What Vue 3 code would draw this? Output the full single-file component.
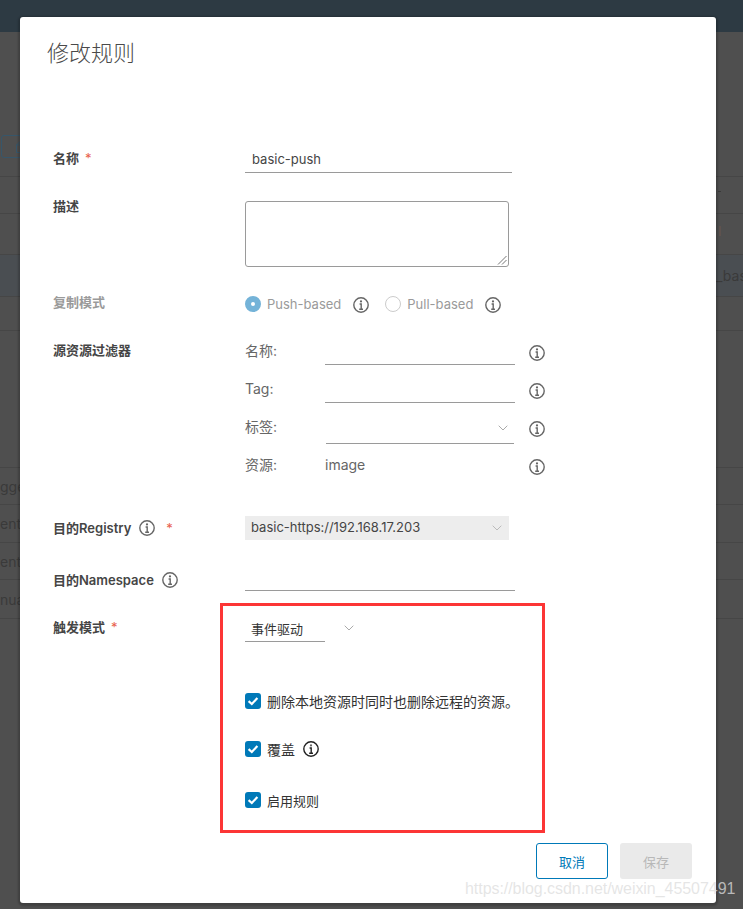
<script setup>
const infoPath = 'M6.6 7H8.2V12M6.2 12.2H10'
const rowHeights = [37, 41, 42, 34, 137, 37, 38, 37, 39, 35]
const leftText = ['', '', '', '', '', 'gge', 'ent_', 'ent_', 'nua', '']
const rightText = ['', '', '_base', '', '', '', '', '', '', '']
const leftRows = rowHeights.map((h, i) => ({ h, text: leftText[i], on: i === 2 }))
const rightRows = rowHeights.map((h, i) => ({ h, text: rightText[i], on: i === 2, bar: i === 1, tick: i === 0 }))
const filters = [
  { label: '名称:', line: true },
  { label: 'Tag:', line: true },
  { label: '标签:', line: true, select: true },
  { label: '资源:', value: 'image' }
]
const checks = [
  { text: '删除本地资源时同时也删除远程的资源。', cls: 'c1' },
  { text: '覆盖', info: true, cls: 'c2' },
  { text: '启用规则', cls: 'c3' }
]
</script>

<template>
  <div class="page">
    <header class="topbar"></header>
    <div class="backdrop">
      <div class="side left">
        <div class="tool">
          <svg class="toolicon" width="8" height="14" viewBox="0 0 8 14"><path d="M.5 12.5V5L4 1.5h4M.5 5H8M.5 12.5H8"/></svg>
        </div>
        <div v-for="(r, i) in leftRows" :key="i" class="row" :class="{ on: r.on }" :style="{ height: r.h + 'px' }">{{ r.text }}</div>
      </div>
      <div class="side right">
        <div v-for="(r, i) in rightRows" :key="i" class="row" :class="{ on: r.on }" :style="{ height: r.h + 'px' }">
          <span v-if="r.bar" class="bar"></span>
          <span v-if="r.tick" class="tick"></span>
          {{ r.text }}
        </div>
      </div>
    </div>

    <section class="modal">
      <h3 class="title">修改规则</h3>
      <form class="form" @submit.prevent>
        <div class="f f-name">
          <label class="lab">名称<i class="req">*</i></label>
          <div class="inp">basic-push</div>
        </div>
        <div class="f f-desc">
          <label class="lab">描述</label>
          <div class="area">
            <svg class="grip" width="10" height="10" viewBox="0 0 10 10"><path d="M1 9.5 9.5 1M5 9.5 9.5 5" stroke="#777" fill="none"/></svg>
          </div>
        </div>
        <div class="f f-mode">
          <label class="lab dim">复制模式</label>
          <div class="radios">
            <span class="radio on"></span><span class="rtext">Push-based</span>
            <svg class="info rinfo" viewBox="0 0 16 16"><circle cx="8" cy="8" r="7.2"/><circle class="dot" cx="8" cy="4.4" r="1.1"/><path :d="infoPath"/></svg>
            <span class="radio pull"></span><span class="rtext">Pull-based</span>
            <svg class="info rinfo" viewBox="0 0 16 16"><circle cx="8" cy="8" r="7.2"/><circle class="dot" cx="8" cy="4.4" r="1.1"/><path :d="infoPath"/></svg>
          </div>
        </div>
        <div class="f f-filter">
          <label class="lab">源资源过滤器</label>
          <div class="filters">
            <div v-for="x in filters" :key="x.label" class="frow">
              <span class="flabel">{{ x.label }}</span>
              <div v-if="x.line" class="fline" :class="{ sel: x.select }">
                <svg v-if="x.select" class="chev" viewBox="0 0 10 6"><path d="M.7.7 5 5l4.3-4.3"/></svg>
              </div>
              <div v-else class="fvalue">{{ x.value }}</div>
              <svg class="info finfo" viewBox="0 0 16 16"><circle cx="8" cy="8" r="7.2"/><circle class="dot" cx="8" cy="4.4" r="1.1"/><path :d="infoPath"/></svg>
            </div>
          </div>
        </div>
        <div class="f f-reg">
          <label class="lab">目的Registry
            <svg class="info linfo" viewBox="0 0 16 16"><circle cx="8" cy="8" r="7.2"/><circle class="dot" cx="8" cy="4.4" r="1.1"/><path :d="infoPath"/></svg>
            <i class="req rr">*</i>
          </label>
          <div class="regsel">basic-https://192.168.17.203
            <svg class="chev" viewBox="0 0 10 6"><path d="M.7.7 5 5l4.3-4.3"/></svg>
          </div>
        </div>
        <div class="f f-ns">
          <label class="lab">目的Namespace
            <svg class="info linfo" viewBox="0 0 16 16"><circle cx="8" cy="8" r="7.2"/><circle class="dot" cx="8" cy="4.4" r="1.1"/><path :d="infoPath"/></svg>
          </label>
          <div class="nsline"></div>
        </div>
        <div class="f f-trigger">
          <label class="lab">触发模式<i class="req">*</i></label>
          <div class="trigger">
            <div class="trigsel"><span class="triginner">事件驱动</span>
              <svg class="chev" viewBox="0 0 10 6"><path d="M.7.7 5 5l4.3-4.3"/></svg>
            </div>
            <div v-for="c in checks" :key="c.text" class="check" :class="c.cls">
              <span class="box"><svg viewBox="0 0 16 16"><path d="M3.6 8.2 6.8 11l5.6-6"/></svg></span>
              <span>{{ c.text }}</span>
              <svg v-if="c.info" class="info cinfo" viewBox="0 0 16 16"><circle cx="8" cy="8" r="7.2"/><circle class="dot" cx="8" cy="4.4" r="1.1"/><path :d="infoPath"/></svg>
            </div>
          </div>
        </div>
      </form>
      <footer class="foot">
        <button class="btn cancel" type="button">取消</button>
        <button class="btn save" type="button" disabled>保存</button>
      </footer>
    </section>

    <div class="redbox"></div>
    <div class="mark">https://blog.csdn.net/weixin_45507491</div>
  </div>
</template>

<style scoped>
.page { position: relative; width: 743px; height: 909px; overflow: hidden; background: #4f4f4f; font-family: Inter, "Noto Sans CJK SC", sans-serif; display: flex; flex-direction: column; }
.topbar { height: 32px; background: #2d3a43; flex: none; }
.backdrop { flex: 1; display: flex; justify-content: space-between; }
.side { color: #3a3a3a; font-size: 14px; overflow: hidden; }
.left { width: 20px; padding-top: 103px; }
.right { width: 27px; padding-top: 144px; }
.tool { position: relative; width: 40px; height: 23px; margin-left: 1px; margin-bottom: 18px; border: 1px solid #37566a; border-radius: 3px; box-sizing: border-box; }
.toolicon { position: absolute; left: 14px; top: 4px; fill: none; stroke: #37566a; }
.row { position: relative; border-top: 1px solid #464646; box-sizing: border-box; white-space: nowrap; display: flex; align-items: center; overflow: hidden; }
.row.on { background: #4a4e52; }
.bar { position: absolute; left: 3px; top: 12px; width: 2px; height: 10px; background: #5e524e; }
.tick { position: absolute; left: 2px; top: 14px; width: 3px; height: 1px; background: #3a3a3a; }

.modal { position: absolute; left: 20px; top: 17px; width: 696px; height: 886px; background: #fff; border-radius: 3px; box-shadow: 0 1px 2px 2px rgba(0,0,0,.2); display: flex; flex-direction: column; box-sizing: border-box; }
.title { margin: 21px 0 0 27px; font-size: 22px; line-height: 30px; font-weight: 300; color: #4a4a4a; flex: none; }
.form { padding: 0 0 0 33px; flex: 1; display: flex; flex-direction: column; color: #454545; font-size: 13px; }
.f { display: flex; align-items: flex-start; }
.lab { width: 192px; flex: none; font-size: 13px; font-weight: 600; color: #454545; line-height: 18px; display: flex; align-items: center; }
.dim { color: #9a9a9a; margin-top: -2px; }
.req { font-style: normal; color: #e8604c; margin-left: 6px; font-weight: 400; }
.rr { margin-left: 11px; }
.f-name { margin-top: 71px; height: 36px; padding-top: 7px; box-sizing: border-box; }
.f-name .lab { margin-top: 3px; }
.inp { width: 267px; height: 27px; border-bottom: 1px solid #9a9a9a; padding: 5px 0 0 7px; box-sizing: border-box; line-height: 17px; }
.f-desc { margin-top: 26px; height: 66px; }
.f-desc .lab { margin-top: -4px; }
.area { position: relative; width: 264px; height: 66px; border: 1px solid #9a9a9a; border-radius: 3px; box-sizing: border-box; }
.grip { position: absolute; right: 1px; bottom: 1px; }
.f-mode { margin-top: 28px; height: 18px; }
.radios { display: flex; align-items: center; color: #9a9a9a; }
.radio { width: 16px; height: 16px; border-radius: 50%; box-sizing: border-box; border: 1px solid #ccc; flex: none; margin-right: 6px; }
.radio.on { border: 6px solid #74b3d8; background: #fff; }
.rinfo { margin-left: 12px; margin-top: 2px; }
.pull { margin-left: 16px; }
.f-filter { margin-top: 26px; height: 152px; }
.f-filter .lab { margin-top: 2px; }
.filters { display: flex; flex-direction: column; }
.frow { display: flex; align-items: flex-start; height: 38px; width: 300px; }
.flabel { width: 80px; color: #666; font-size: 14px; line-height: 18px; padding-top: 3px; flex: none; }
.fline { width: 190px; height: 26px; border-bottom: 1px solid #9a9a9a; box-sizing: border-box; position: relative; }
.fline.sel { width: 188px; height: 27px; margin-left: 1px; margin-top: 2px; }
.fline .chev { position: absolute; right: 6px; top: 8px; }
.fvalue { width: 190px; color: #666; font-size: 14px; line-height: 18px; padding-top: 3px; }
.finfo { margin-left: 14px; margin-top: 6px; }
.frow .sel + .finfo { margin-left: 15px; }
.f-reg { margin-top: 25px; height: 24px; }
.f-reg .lab { margin-top: 3px; }
.regsel { width: 264px; height: 24px; background: #ededed; line-height: 23px; padding-left: 6px; box-sizing: border-box; position: relative; }
.regsel .chev { position: absolute; right: 7px; top: 9px; stroke: #bbb; }
.f-ns { margin-top: 25px; height: 26px; }
.f-ns .lab { margin-top: 6px; }
.nsline { width: 270px; height: 26px; border-bottom: 1px solid #9a9a9a; box-sizing: border-box; }
.f-trigger { margin-top: 29px; }
.f-trigger .lab { margin-top: -2px; }
.trigger { display: flex; flex-direction: column; color: #333; }
.trigsel { display: flex; align-items: center; height: 22px; margin-bottom: 50px; }
.triginner { width: 80px; height: 22px; border-bottom: 1px solid #9a9a9a; box-sizing: border-box; padding-left: 6px; line-height: 18px; }
.trigsel .chev { margin-left: 19px; margin-top: -7px; }
.check { display: flex; align-items: center; height: 18px; font-size: 14px; }
.c1 { margin-bottom: 30px; }
.c2 { margin-bottom: 33px; }
.c3 { font-size: 13px; }
.box { width: 16px; height: 16px; border-radius: 3px; background: #0079b8; margin-right: 6px; flex: none; display: flex; }
.box svg { width: 16px; height: 16px; fill: none; stroke: #fff; stroke-width: 2.2; }
.cinfo { margin-left: 8px; }
.cinfo circle, .cinfo path { stroke: #222; }
.cinfo .dot { fill: #222; stroke: none; }

.info { width: 16px; height: 16px; flex: none; fill: none; stroke: #666; stroke-width: 1.4; }
.info .dot { fill: #666; stroke: none; }
.linfo { margin-left: 8px; }
.chev { width: 10px; height: 6px; fill: none; stroke: #aaa; stroke-width: 1; flex: none; }

.foot { display: flex; justify-content: flex-end; gap: 12px; padding: 0 24px 24px 0; flex: none; }
.btn { width: 72px; height: 36px; border-radius: 3px; font: 13px Inter, "Noto Sans CJK SC", sans-serif; box-sizing: border-box; }
.cancel { background: #fff; border: 1px solid #0079b8; color: #0079b8; }
.save { background: #eaeaea; border: 0; color: #b8b8b8; }

.redbox { position: absolute; left: 220px; top: 603px; width: 325px; height: 230px; border: 3px solid #fc3535; box-sizing: border-box; }
.mark { position: absolute; left: 465px; top: 880px; font: 16px "Liberation Sans", sans-serif; letter-spacing: -0.05px; color: rgba(221,221,221,.76); white-space: nowrap; }
</style>
